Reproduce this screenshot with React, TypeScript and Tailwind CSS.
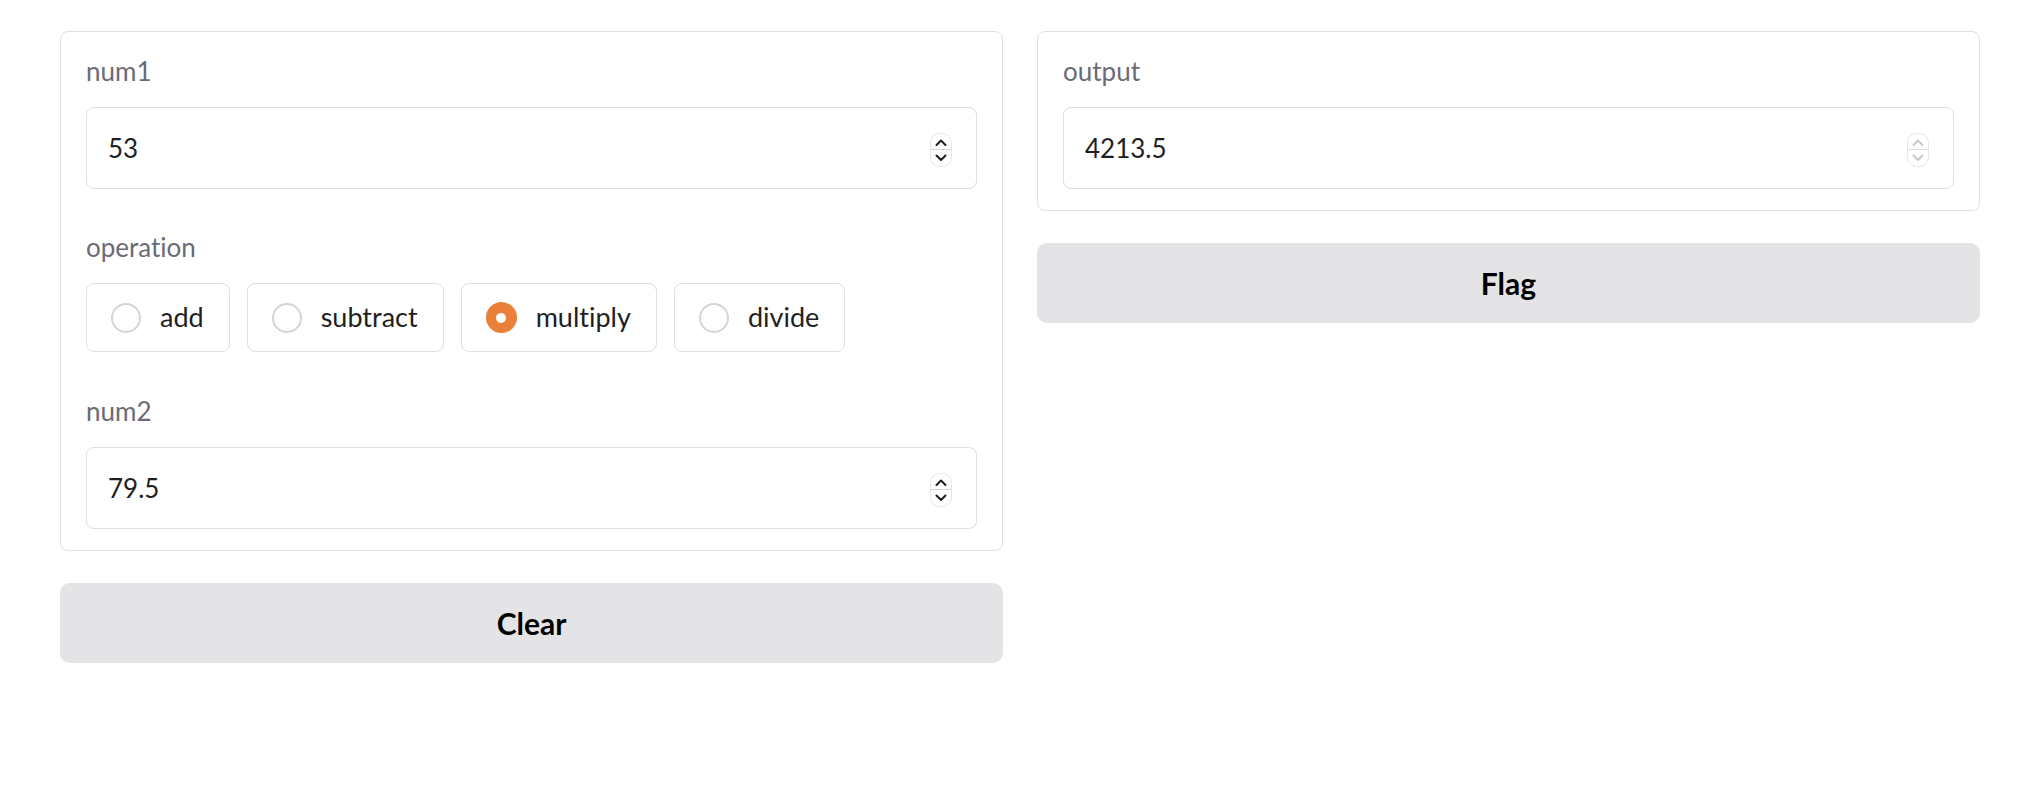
import React from 'react'

// Calculator demo: two number inputs + an operation radio group on the left,
// the read-only result and a Flag button on the right.

const FONT = { fontFamily: "Lato, 'Noto Sans', sans-serif" }

const OPERATIONS = ['add', 'subtract', 'multiply', 'divide']

function Spinner({ disabled = false }: { disabled?: boolean }) {
  const stroke = disabled ? '#c8c8c8' : '#1f1f1f'
  return (
    <svg width="22" height="34" viewBox="0 0 22 34" className="mt-[3px] shrink-0" aria-hidden="true">
      <rect x="0.5" y="0.5" width="21" height="33" rx="9" fill="#fff" stroke="#e6e6e6" />
      <line x1="1" y1="16.5" x2="21" y2="16.5" stroke={disabled ? '#e2e2e2' : '#d6d6d6'} />
      <path d="M6.5 12 L11 7.5 L15.5 12" fill="none" stroke={stroke} strokeWidth="2" strokeLinecap="round" strokeLinejoin="round" />
      <path d="M6.5 22.5 L11 27 L15.5 22.5" fill="none" stroke={stroke} strokeWidth="2" strokeLinecap="round" strokeLinejoin="round" />
    </svg>
  )
}

function Label({ children }: { children: React.ReactNode }) {
  return <span className="block text-[26px] leading-[30px] text-[#6b6b76] mb-[21px]">{children}</span>
}

function NumberField({ label, value, disabled = false }: { label: string; value: string; disabled?: boolean }) {
  return (
    <div>
      <Label>{label}</Label>
      <div className="flex h-[82px] items-center rounded-[8px] border border-[#dfdfe2] bg-white pl-[21px] pr-[24px]">
        <span className="flex-1 text-[26px] text-[#1f1f23]">{value}</span>
        <Spinner disabled={disabled} />
      </div>
    </div>
  )
}

function Radio({ label, checked }: { label: string; checked: boolean }) {
  return (
    <div className="flex h-[69px] items-center gap-[19px] rounded-[8px] border border-[#dfdfe2] bg-white pl-[24px] pr-[25px]">
      {checked ? (
        <span className="flex h-[31px] w-[31px] items-center justify-center rounded-full bg-[#e8803a]">
          <span className="h-[10px] w-[10px] rounded-full bg-white" />
        </span>
      ) : (
        <span className="h-[30px] w-[30px] rounded-full border-2 border-[#d4d4d8] bg-white" />
      )}
      <span className="text-[27px] text-[#1f1f23]">{label}</span>
    </div>
  )
}

function ActionButton({ children }: { children: React.ReactNode }) {
  return (
    <button className="flex h-[80px] w-full items-center justify-center rounded-[10px] bg-[#e4e4e7] text-[30px] font-bold text-black">
      {children}
    </button>
  )
}

export default function App() {
  return (
    <div className="h-[790px] w-full bg-white pt-[31px] pl-[60px] pr-[40px] [font-variant-ligatures:none]" style={FONT}>
      <div className="flex items-start gap-[34px]">
        {/* inputs */}
        <div className="flex flex-1 flex-col gap-[32px]">
          <div className="rounded-[8px] border border-[#dfdfe2] bg-white px-[25px] pt-[24px] pb-[21px]">
            <NumberField label="num1" value="53" />
            <div className="mt-[43px]">
              <Label>operation</Label>
              <div className="flex gap-[17px]">
                {OPERATIONS.map((op) => (
                  <Radio key={op} label={op} checked={op === 'multiply'} />
                ))}
              </div>
            </div>
            <div className="mt-[44px]">
              <NumberField label="num2" value="79.5" />
            </div>
          </div>
          <ActionButton>Clear</ActionButton>
        </div>

        {/* output */}
        <div className="flex flex-1 flex-col gap-[32px]">
          <div className="rounded-[8px] border border-[#dfdfe2] bg-white px-[25px] pt-[24px] pb-[21px]">
            <NumberField label="output" value="4213.5" disabled />
          </div>
          <ActionButton>Flag</ActionButton>
        </div>
      </div>
    </div>
  )
}
